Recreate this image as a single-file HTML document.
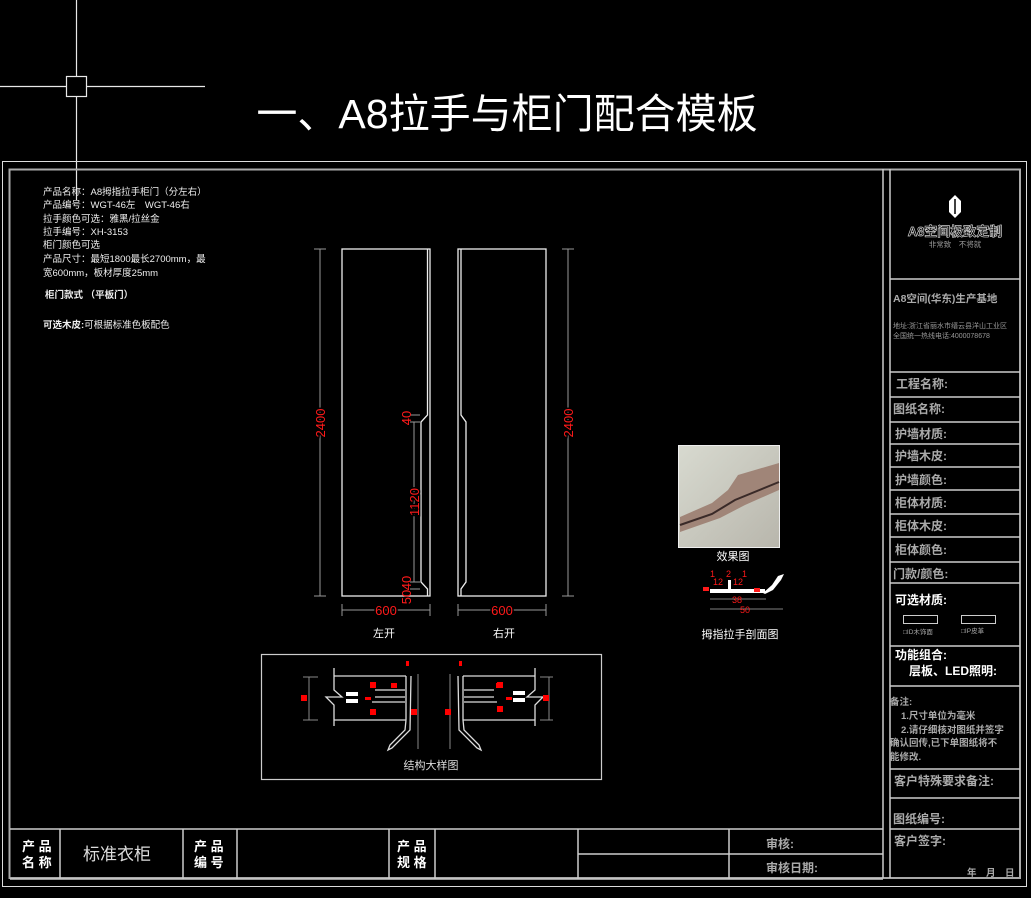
<!DOCTYPE html>
<html><head><meta charset="utf-8"><style>
html,body{margin:0;padding:0;background:#000;}
body{width:1031px;height:898px;overflow:hidden;position:relative;}
svg{position:absolute;left:0;top:0;}
text{font-family:"Liberation Sans","Noto Sans CJK SC","WenQuanYi Zen Hei",sans-serif;}
</style></head><body>
<svg width="1031" height="898" viewBox="0 0 1031 898">
<g stroke="#e8e8e8" stroke-width="1.2" fill="none">
<line x1="76.5" y1="0" x2="76.5" y2="76"/>
<line x1="76.5" y1="97" x2="76.5" y2="200"/>
<line x1="0" y1="86.5" x2="66" y2="86.5"/>
<line x1="87" y1="86.5" x2="205" y2="86.5"/>
<rect x="66.5" y="76.5" width="20" height="20"/>
</g>
<text x="507" y="128" fill="#fff" font-size="41" text-anchor="middle">一、A8拉手与柜门配合模板</text>
<rect x="2.5" y="161.5" width="1024" height="725" fill="none" stroke="#ddd" stroke-width="1"/>
<rect x="9.5" y="169.5" width="1010.5" height="708.5" fill="none" stroke="#aaa" stroke-width="2"/>
<g stroke="#ccc" stroke-width="1.5" fill="none">
<line x1="883" y1="169" x2="883" y2="878"/>
<line x1="890" y1="169" x2="890" y2="878"/>
<line x1="890" y1="279" x2="1020" y2="279"/>
<line x1="890" y1="372" x2="1020" y2="372"/>
<line x1="890" y1="397" x2="1020" y2="397"/>
<line x1="890" y1="422" x2="1020" y2="422"/>
<line x1="890" y1="444" x2="1020" y2="444"/>
<line x1="890" y1="467" x2="1020" y2="467"/>
<line x1="890" y1="490" x2="1020" y2="490"/>
<line x1="890" y1="514" x2="1020" y2="514"/>
<line x1="890" y1="537" x2="1020" y2="537"/>
<line x1="890" y1="562" x2="1020" y2="562"/>
<line x1="890" y1="583" x2="1020" y2="583"/>
<line x1="890" y1="646" x2="1020" y2="646"/>
<line x1="890" y1="686" x2="1020" y2="686"/>
<line x1="890" y1="769" x2="1020" y2="769"/>
<line x1="890" y1="798" x2="1020" y2="798"/>
<line x1="890" y1="829" x2="1020" y2="829"/>
<line x1="10" y1="829" x2="883" y2="829"/>
<line x1="10" y1="879" x2="883" y2="879"/>
<line x1="578" y1="854" x2="883" y2="854"/>
<line x1="60" y1="829" x2="60" y2="879"/>
<line x1="183" y1="829" x2="183" y2="879"/>
<line x1="237" y1="829" x2="237" y2="879"/>
<line x1="389" y1="829" x2="389" y2="879"/>
<line x1="435" y1="829" x2="435" y2="879"/>
<line x1="578" y1="829" x2="578" y2="879"/>
<line x1="729" y1="829" x2="729" y2="879"/>
</g>
<g font-size="13" fill="#fff" font-weight="bold">
<text x="22" y="851">产 品</text><text x="22" y="867">名 称</text>
<text x="194" y="851">产 品</text><text x="194" y="867">编 号</text>
<text x="397" y="851">产 品</text><text x="397" y="867">规 格</text>
</g>
<text x="83" y="860" fill="#ddd" font-size="17">标准衣柜</text>
<text x="766" y="848" fill="#aaa" font-size="12" font-weight="bold">审核:</text>
<text x="766" y="872" fill="#aaa" font-size="12" font-weight="bold">审核日期:</text>
<g fill="#eee" font-size="9.5">
<text x="43" y="195">产品名称：A8拇指拉手柜门（分左右）</text>
<text x="43" y="208">产品编号：WGT-46左　WGT-46右</text>
<text x="43" y="222">拉手颜色可选：雅黑/拉丝金</text>
<text x="43" y="235">拉手编号：XH-3153</text>
<text x="43" y="248">柜门颜色可选</text>
<text x="43" y="262">产品尺寸：最短1800最长2700mm，最</text>
<text x="43" y="276">宽600mm，板材厚度25mm</text>
<text x="45" y="298" font-weight="bold">柜门款式 （平板门）</text>
<text x="43" y="328"><tspan font-weight="bold">可选木皮:</tspan>可根据标准色板配色</text>
</g>
<g stroke="#eee" stroke-width="1.3" fill="none">
<rect x="342" y="249" width="88" height="347"/>
<polyline points="427.5,249 427.5,415 421,422 421,582 427.5,589 427.5,596"/>
<rect x="458" y="249" width="88" height="347"/>
<polyline points="461,249 461,415 466,422 466,582 461,589 461,596"/>
</g>
<g stroke="#999" stroke-width="1" fill="none">
<line x1="320" y1="249" x2="320" y2="596"/><line x1="314" y1="249" x2="326" y2="249"/><line x1="314" y1="596" x2="326" y2="596"/>
<line x1="568" y1="249" x2="568" y2="596"/><line x1="562" y1="249" x2="574" y2="249"/><line x1="562" y1="596" x2="574" y2="596"/>
<line x1="342" y1="610" x2="430" y2="610"/><line x1="342" y1="604" x2="342" y2="616"/><line x1="430" y1="604" x2="430" y2="616"/>
<line x1="458" y1="610" x2="546" y2="610"/><line x1="458" y1="604" x2="458" y2="616"/><line x1="546" y1="604" x2="546" y2="616"/>
<line x1="414" y1="422" x2="414" y2="582"/><line x1="410" y1="415" x2="420" y2="415"/><line x1="410" y1="422" x2="420" y2="422"/><line x1="410" y1="582" x2="420" y2="582"/><line x1="410" y1="589" x2="420" y2="589"/>
</g>
<g fill="#ff1a1a" font-size="13">
<text transform="translate(325,423) rotate(-90)" text-anchor="middle" style="paint-order:stroke" stroke="#000" stroke-width="3">2400</text>
<text transform="translate(573,423) rotate(-90)" text-anchor="middle" style="paint-order:stroke" stroke="#000" stroke-width="3">2400</text>
<text transform="translate(419,502) rotate(-90)" text-anchor="middle" style="paint-order:stroke" stroke="#000" stroke-width="3">1120</text>
<text transform="translate(411,418) rotate(-90)" text-anchor="middle">40</text>
<text transform="translate(411,583) rotate(-90)" text-anchor="middle">40</text>
<text transform="translate(411,597) rotate(-90)" text-anchor="middle">50</text>
<text x="386" y="615" text-anchor="middle" style="paint-order:stroke" stroke="#000" stroke-width="3">600</text>
<text x="502" y="615" text-anchor="middle" style="paint-order:stroke" stroke="#000" stroke-width="3">600</text>
</g>
<text x="384" y="637" fill="#fff" font-size="11" text-anchor="middle">左开</text>
<text x="504" y="637" fill="#fff" font-size="11" text-anchor="middle">右开</text>
<defs><linearGradient id="pg" x1="0" y1="0" x2="1" y2="1"><stop offset="0" stop-color="#d8dad0"/><stop offset="1" stop-color="#b8b6ac"/></linearGradient></defs>
<rect x="678.5" y="445.5" width="101" height="102" fill="url(#pg)" stroke="#eee"/>
<path d="M680,517 L712,503 L728,490 L738,475 L779,463 L779,490 L745,505 L720,518 L680,532 Z" fill="#a08578"/>
<path d="M680,525 L712,514 L735,500 L779,482" stroke="#3a2a28" stroke-width="2" fill="none"/>
<text x="733" y="560" fill="#fff" font-size="11" text-anchor="middle">效果图</text>
<g fill="#fff"><rect x="710" y="589" width="55" height="4"/><rect x="728" y="580" width="3" height="10"/>
<path d="M763,593 L772,585 L778,576 L784,574 L781,580 L773,590 L765,594Z"/></g>
<g stroke="#aaa" stroke-width="0.8"><line x1="710" y1="599" x2="766" y2="599"/><line x1="710" y1="609" x2="783" y2="609"/></g>
<g fill="#ff1a1a" font-size="9"><text x="710" y="577">1</text><text x="726" y="577">2</text><text x="742" y="577">1</text><text x="713" y="585">12</text><text x="733" y="585">12</text><text x="732" y="603">38</text><text x="740" y="613">50</text><rect x="703" y="587" width="6" height="4"/><rect x="754" y="588" width="6" height="4"/></g>
<text x="740" y="638" fill="#fff" font-size="11" text-anchor="middle">拇指拉手剖面图</text>
<rect x="261.5" y="654.5" width="340" height="125" fill="none" stroke="#ccc" stroke-width="1.2"/>
<g stroke="#ddd" stroke-width="1.3" fill="none">
<polyline points="334,668 334,690 342,697 326,697 334,705 334,726"/>
<line x1="334" y1="676" x2="406" y2="676"/><line x1="334" y1="720" x2="406" y2="720"/>
<line x1="406" y1="676" x2="406" y2="720"/>
<polyline points="406,720 405,730 390,745 388,750 392,748 410,730 411,676"/>
<line x1="375" y1="690" x2="405" y2="690"/><line x1="375" y1="697" x2="405" y2="697"/><line x1="372" y1="702" x2="405" y2="702"/>
<polyline points="535,668 535,690 527,697 543,697 535,705 535,726"/>
<line x1="463" y1="676" x2="535" y2="676"/><line x1="463" y1="720" x2="535" y2="720"/>
<polyline points="463,676 463,720 464,730 479,745 481,750 477,748 459,730 458,676"/>
<line x1="464" y1="690" x2="494" y2="690"/><line x1="464" y1="697" x2="494" y2="697"/><line x1="464" y1="702" x2="497" y2="702"/>
</g>
<g stroke="#888" stroke-width="1"><line x1="309" y1="677" x2="309" y2="720"/><line x1="303" y1="677" x2="318" y2="677"/><line x1="303" y1="720" x2="318" y2="720"/>
<line x1="418" y1="674" x2="418" y2="749"/><line x1="450" y1="674" x2="450" y2="749"/>
<line x1="549" y1="677" x2="549" y2="720"/><line x1="540" y1="677" x2="553" y2="677"/><line x1="540" y1="720" x2="553" y2="720"/></g>
<g fill="#fff"><rect x="346" y="692" width="12" height="4"/><rect x="346" y="699" width="12" height="4"/><rect x="513" y="691" width="12" height="4"/><rect x="513" y="698" width="12" height="4"/></g>
<g fill="#ff0000"><rect x="301" y="695" width="6" height="6"/><rect x="370" y="682" width="6" height="6"/><rect x="391" y="683" width="6" height="5"/><rect x="365" y="697" width="6" height="3"/><rect x="370" y="709" width="6" height="6"/><rect x="411" y="709" width="6" height="6"/><rect x="406" y="661" width="3" height="5"/>
<rect x="459" y="661" width="3" height="5"/><rect x="445" y="709" width="6" height="6"/><rect x="496" y="683" width="6" height="5"/><rect x="497" y="706" width="6" height="6"/><rect x="497" y="682" width="6" height="6"/><rect x="506" y="697" width="6" height="3"/><rect x="543" y="695" width="6" height="6"/></g>
<text x="431" y="769" fill="#ddd" font-size="11" text-anchor="middle">结构大样图</text>
<path d="M955,195 L961,201 L961,212 L955,218 L949,212 L949,201Z" fill="#fff"/>
<line x1="955" y1="199" x2="955" y2="214" stroke="#000" stroke-width="1.5"/>
<text x="955" y="236" fill="#000" stroke="#ccc" stroke-width="0.7" font-size="13" font-weight="bold" text-anchor="middle">A8空间极致定制</text>
<text x="955" y="247" fill="#999" font-size="7.5" text-anchor="middle">非常致　不将就</text>
<text x="893" y="302" fill="#aaa" font-size="10.5" font-weight="bold">A8空间(华东)生产基地</text>
<text x="893" y="328" fill="#999" font-size="7">地址:浙江省丽水市缙云县洋山工业区</text>
<text x="893" y="338" fill="#999" font-size="7">全国统一热线电话:4000078678</text>
<g fill="#aaa" font-size="12" font-weight="bold">
<text x="896" y="388">工程名称:</text>
<text x="893" y="413">图纸名称:</text>
<text x="895" y="438">护墙材质:</text>
<text x="895" y="460">护墙木皮:</text>
<text x="895" y="484">护墙颜色:</text>
<text x="895" y="507">柜体材质:</text>
<text x="895" y="530">柜体木皮:</text>
<text x="895" y="554">柜体颜色:</text>
<text x="893" y="578">门款/颜色:</text>
<text x="894" y="785">客户特殊要求备注:</text>
<text x="893" y="823">图纸编号:</text>
<text x="894" y="845">客户签字:</text>
</g>
<g fill="#fff" font-size="12" font-weight="bold">
<text x="895" y="604">可选材质:</text>
<text x="895" y="659">功能组合:</text>
<text x="909" y="675">层板、LED照明:</text>
</g>
<g fill="none" stroke="#ccc"><rect x="903.5" y="615.5" width="34" height="8"/><rect x="961.5" y="615.5" width="34" height="8"/></g>
<g fill="#aaa" font-size="6.5"><text x="903" y="634">□ID木饰面</text><text x="961" y="633">□IP皮革</text></g>
<g fill="#aaa" font-size="9.5" font-weight="bold">
<text x="890" y="705">备注:</text>
<text x="901" y="719">1.尺寸单位为毫米</text>
<text x="901" y="733">2.请仔细核对图纸并签字</text>
<text x="890" y="746">确认回传,已下单图纸将不</text>
<text x="890" y="760">能修改.</text>
<text x="967" y="876">年　月　日</text>
</g>
</svg>
</body></html>
